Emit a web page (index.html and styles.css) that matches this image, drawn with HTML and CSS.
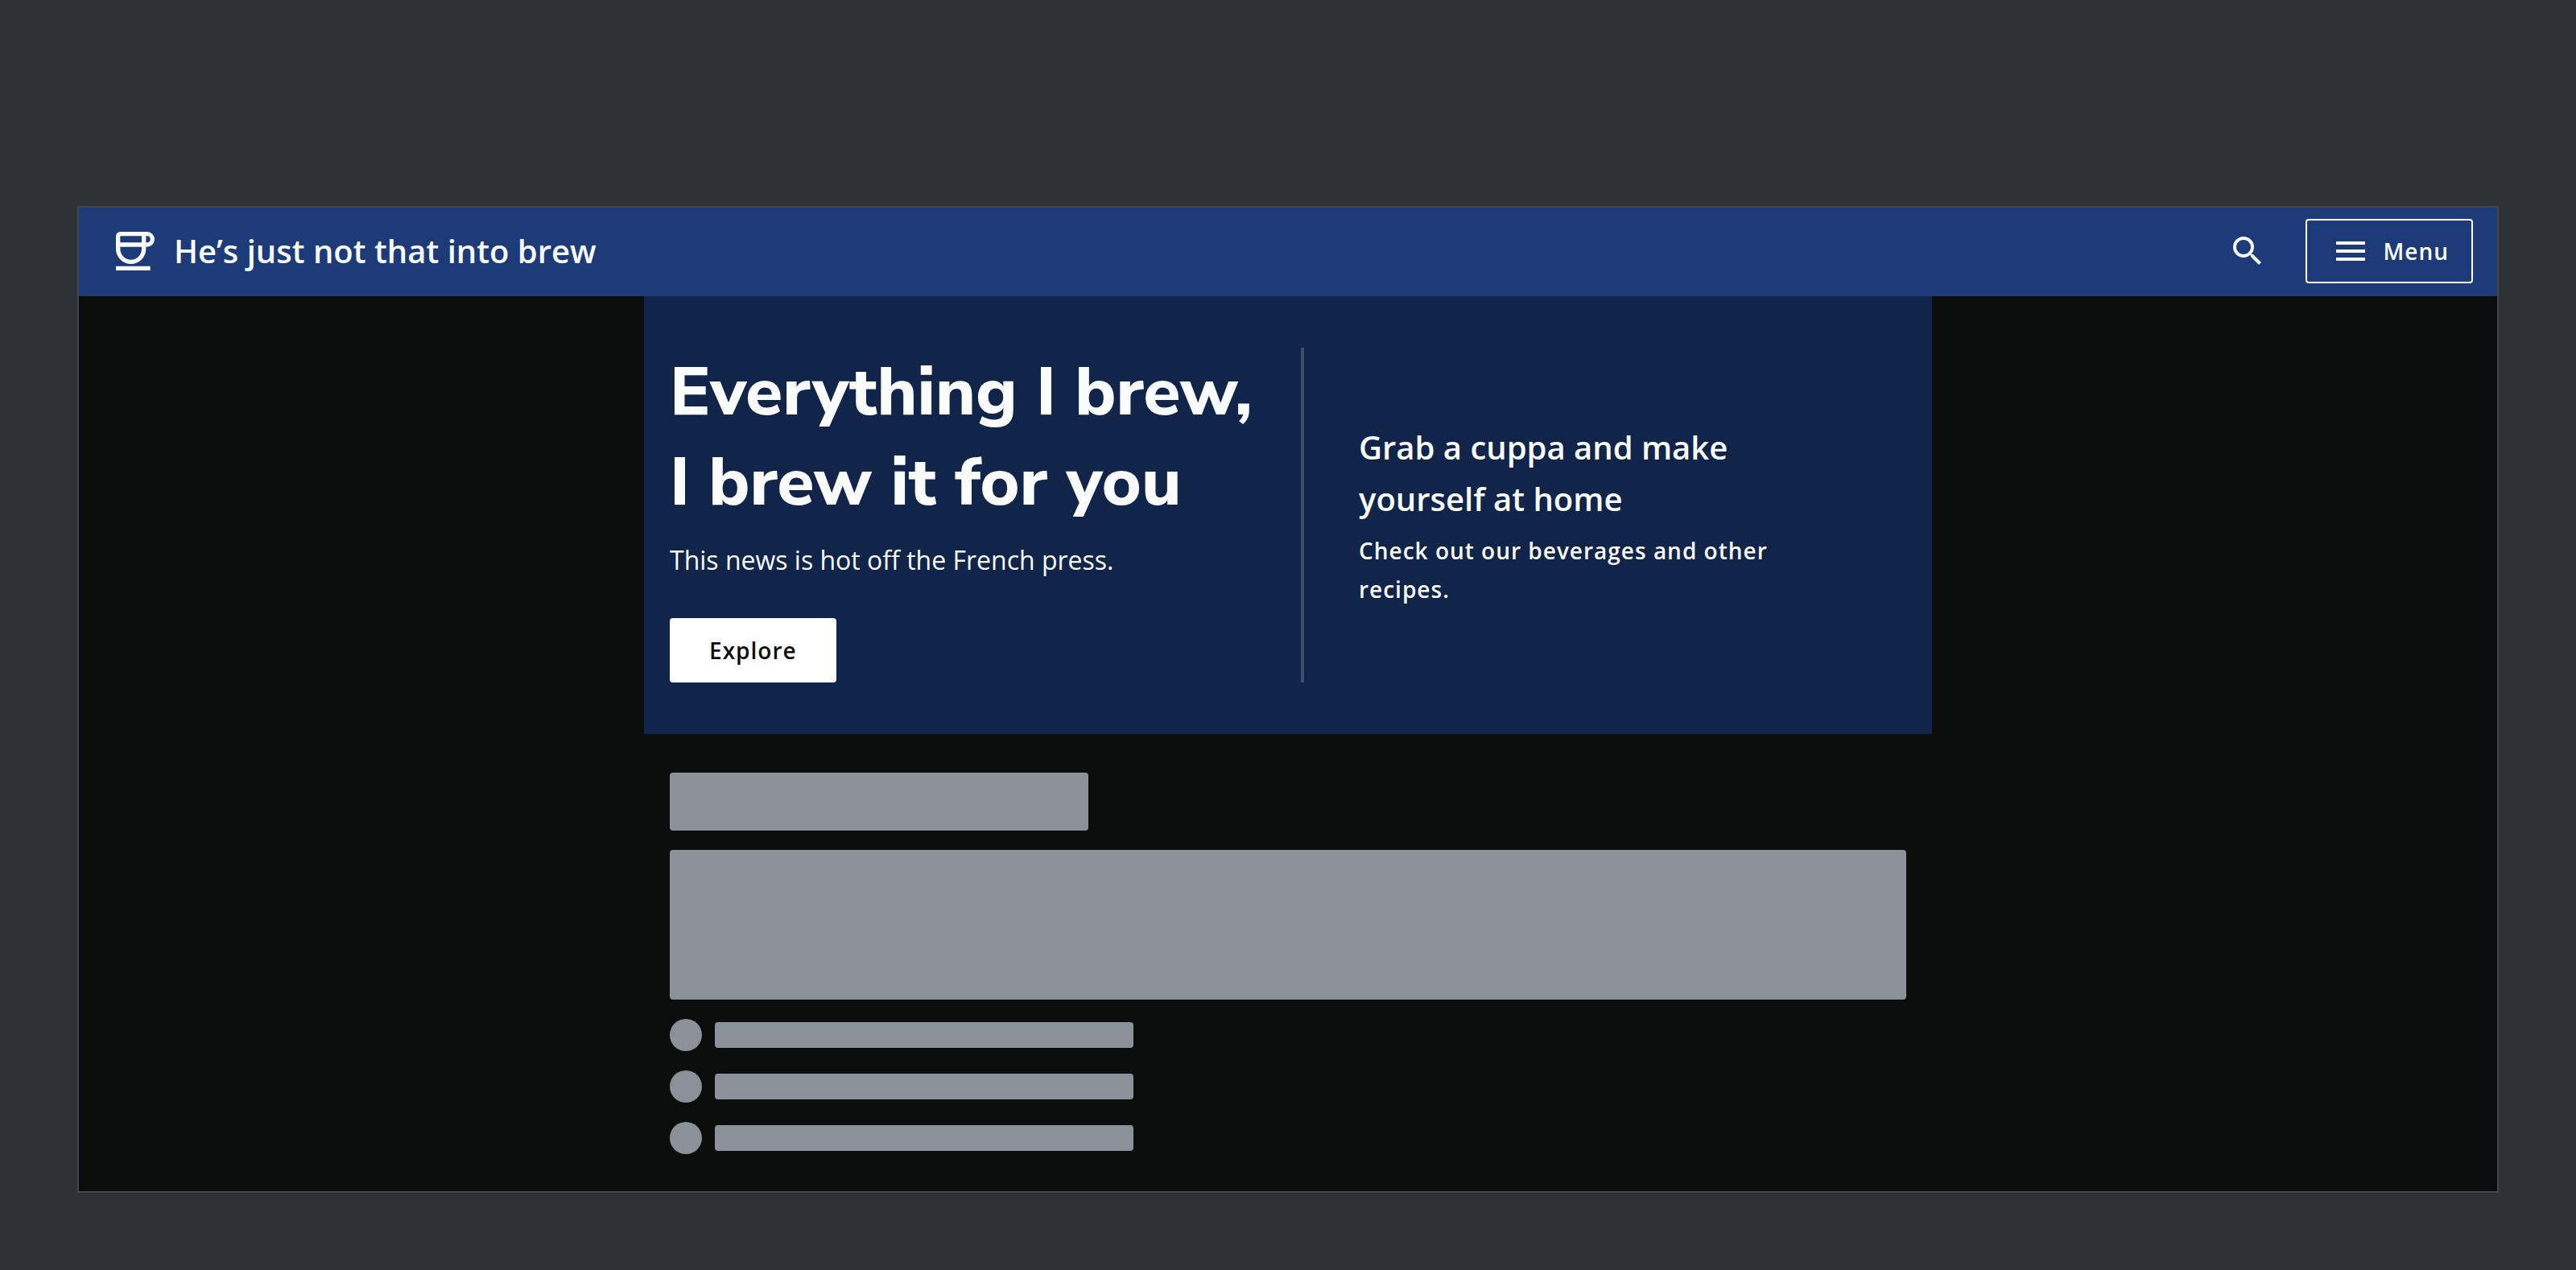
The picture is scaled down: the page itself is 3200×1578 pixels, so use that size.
FILE: index.html
```html
<!DOCTYPE html>
<html lang="en">
<head>
<meta charset="utf-8">
<meta name="viewport" content="width=device-width, initial-scale=1">
<title>He’s just not that into brew</title>
<link rel="stylesheet" href="styles.css">
</head>
<body>
<div class="frame">
  <header class="app-header">
    <a class="brand" href="#">
      <svg class="brand-logo" viewBox="0 0 18 18" aria-hidden="true">
        <g fill="none" stroke="currentColor" stroke-width="2">
          <path d="M2 1h11v7a6 6 0 0 1-12 0V2a1 1 0 0 1 1-1z"/>
          <path d="M1 6h12M13 1h1.500a2.500 2.500 0 0 1 0 5H13"/>
          <path d="M0 17h16"/>
        </g>
      </svg>
      <span class="brand-name">He’s just not that into brew</span>
    </a>
    <div class="actions">
      <button class="icon-button" type="button" aria-label="Search">
        <svg class="icon" viewBox="0 0 24 24" aria-hidden="true"><path fill="currentColor" d="M15.500 14h-.79l-.28-.27A6.471 6.471 0 0 0 16 9.500 6.500 6.500 0 1 0 9.500 16c1.610 0 3.090-.59 4.230-1.570l.27.280v.790l5 4.990L20.490 19l-4.990-5zm-6 0C7.010 14 5 11.990 5 9.500S7.010 5 9.500 5 14 7.010 14 9.500 11.990 14 9.500 14z"/></svg>
      </button>
      <button class="menu-button" type="button">
        <svg class="icon" viewBox="0 0 24 24" aria-hidden="true"><path fill="currentColor" d="M3 18h18v-2H3v2zm0-5h18v-2H3v2zm0-7v2h18V6H3z"/></svg>
        Menu
      </button>
    </div>
  </header>
  <main>
    <section class="hero">
      <div class="hero-main">
        <h1>Everything I brew,<br>I brew it for you</h1>
        <p class="lead">This news is hot off the French press.</p>
        <button class="explore" type="button">Explore</button>
      </div>
      <div class="hero-aside">
        <h2>Grab a cuppa and make yourself at home</h2>
        <p>Check out our beverages and other recipes.</p>
      </div>
    </section>
    <section class="skeleton" aria-hidden="true">
      <div class="bone bone-title"></div>
      <div class="bone bone-block"></div>
      <div class="bone-row"><div class="bone bone-dot"></div><div class="bone bone-line"></div></div>
      <div class="bone-row"><div class="bone bone-dot"></div><div class="bone bone-line"></div></div>
      <div class="bone-row"><div class="bone bone-dot"></div><div class="bone bone-line"></div></div>
    </section>
  </main>
</div>
</body>
</html>
```
FILE: styles.css
```css
* { box-sizing: border-box; }

body {
  margin: 0;
  padding: 256px 96px 96px;
  background: #2d3035;
  color: #fafcfc;
  font-family: "Open Sans", "Noto Sans", sans-serif;
}

h1, h2, p { margin: 0; }

button { font: inherit; color: inherit; cursor: pointer; }

.frame {
  background: #0a0d0c;
  outline: 2px solid #41464c;
  outline-offset: -2px;
}

.app-header {
  display: flex;
  align-items: center;
  justify-content: space-between;
  padding: 16px 32px 16px 48px;
  background: #1d3b78;
}

.brand {
  display: flex;
  align-items: center;
  gap: 24px;
  color: inherit;
  text-decoration: none;
}

.brand-logo { width: 48px; height: 48px; }

.brand-name {
  font-size: 40px;
  font-weight: 600;
  line-height: 64px;
}

.actions { display: flex; align-items: center; gap: 32px; }

.icon { display: block; width: 48px; height: 48px; }

.icon-button {
  padding: 16px;
  border: 0;
  background: none;
}

.menu-button {
  display: flex;
  align-items: center;
  gap: 16px;
  height: 80px;
  padding: 0 28px 0 30px;
  border: 2px solid #ffffff;
  border-radius: 4px;
  background: none;
  font-size: 28px;
  font-weight: 600;
  letter-spacing: 1px;
}

.hero {
  display: grid;
  grid-template-columns: 1fr 752px;
  max-width: 1600px;
  margin: 0 auto;
  padding: 64px 32px;
  background: #11244a;
}

h1 {
  font-family: "Nunito Sans", Nunito, Lato, sans-serif;
  font-size: 84px;
  font-weight: 800;
  line-height: 112px;
}

.lead {
  margin-top: 16px;
  font-size: 32px;
  line-height: 48px;
}

.explore {
  display: block;
  height: 80px;
  margin-top: 48px;
  padding: 0 49px;
  border: 0;
  border-radius: 4px;
  background: #ffffff;
  color: #0a0d0c;
  font-size: 28px;
  font-weight: 600;
  letter-spacing: 1px;
}

.hero-aside {
  display: flex;
  flex-direction: column;
  justify-content: center;
  gap: 8px;
  padding: 0 128px 0 68px;
  border-left: 4px solid #414d68;
}

h2 {
  font-size: 40px;
  font-weight: 600;
  line-height: 64px;
}

.hero-aside p {
  font-size: 28px;
  font-weight: 600;
  line-height: 48px;
  letter-spacing: 1px;
}

.skeleton {
  display: flex;
  flex-direction: column;
  gap: 24px;
  max-width: 1600px;
  margin: 0 auto;
  padding: 48px 32px;
}

.bone { border-radius: 4px; background: #8a9199; }
.bone-title { width: 520px; height: 72px; }
.bone-block { height: 186px; }
.bone-row { display: flex; align-items: center; gap: 16px; }
.bone-dot { width: 40px; height: 40px; border-radius: 50%; }
.bone-line { width: 520px; height: 32px; }
```
